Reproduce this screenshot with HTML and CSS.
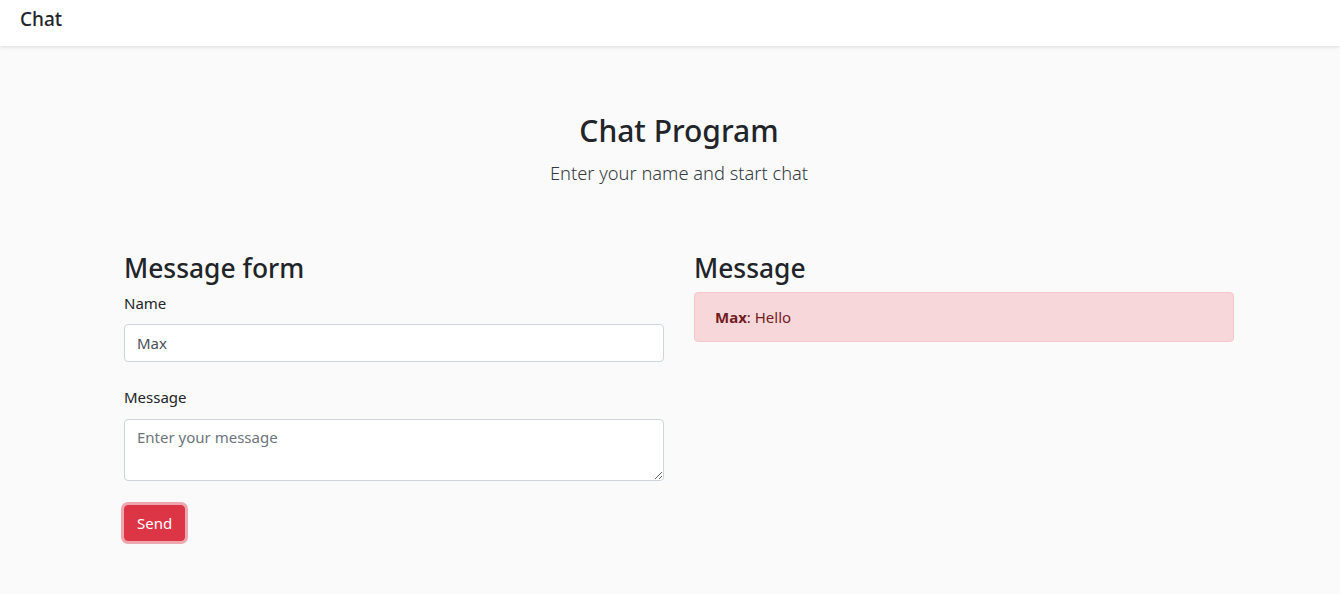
FILE: index.html
```html
<!DOCTYPE html>
<html lang="en">
<head>
<meta charset="utf-8">
<title>Chat</title>
<link rel="stylesheet" href="styles.css">
</head>
<body>
<nav class="navbar"><span class="brand">Chat</span></nav>
<main class="page">
  <header class="hero">
    <h2 class="title">Chat Program</h2>
    <p class="lead">Enter your name and start chat</p>
  </header>
  <div class="row">
    <section class="col">
      <h3 class="heading">Message form</h3>
      <div class="group">
        <label class="label" for="name">Name</label>
        <input class="field" id="name" type="text" value="Max">
      </div>
      <div class="group">
        <label class="label" for="msg">Message</label>
        <textarea class="field area" id="msg" rows="2" placeholder="Enter your message"></textarea>
      </div>
      <button class="btn" type="button">Send</button>
    </section>
    <section class="col">
      <h3 class="heading">Message</h3>
      <div class="alert"><strong>Max</strong>: Hello</div>
    </section>
  </div>
</main>
</body>
</html>
```

FILE: styles.css
```css
* { box-sizing: border-box; }
html, body { margin: 0; }
body {
  background: #fafafa;
  color: #212529;
  font-family: "Noto Sans", "Open Sans", sans-serif;
  font-size: 16px;
  line-height: 1.5;
  height: 594px;
  overflow: hidden;
}
.navbar {
  height: 46px;
  background: #fff;
  box-shadow: 0 1px 4px rgba(0,0,0,0.12);
  display: flex;
  align-items: center;
  padding-left: 20px;
  padding-bottom: 8px;
}
.brand {
  font-size: 19px;
  font-weight: 500;
  color: #212529;
}
.page {
  width: 1140px;
  margin-left: calc(50% - 561px);
}
.hero {
  text-align: center;
  padding-top: 66px;
}
.title {
  margin: 0;
  font-size: 30px;
  font-weight: 500;
  line-height: 38px;
}
.lead {
  margin: 8px 0 0;
  font-size: 18.3px;
  line-height: 30px;
  font-weight: 300;
  color: #343a40;
}
.row {
  display: flex;
  gap: 30px;
  padding: 0 15px;
  margin-top: 64px;
}
.col { flex: 1; }
.heading {
  margin: 0 0 6px;
  font-size: 26.4px;
  font-weight: 500;
  line-height: 33.6px;
}
.group { margin-bottom: 24px; }
.label {
  display: block;
  margin-bottom: 10px;
  font-size: 15px;
}
.field {
  display: block;
  width: 100%;
  height: 38px;
  padding: 6px 12px;
  font: inherit;
  font-size: 15px;
  color: #495057;
  background: #fff;
  border: 1px solid #ced4da;
  border-radius: 4px;
}
.field::placeholder { color: #6c757d; }
.area { height: 62px; resize: vertical; }
.btn {
  display: block;
  font: inherit;
  font-size: 15px;
  color: #fff;
  background: #dc3545;
  border: 1px solid #dc3545;
  border-radius: 4px;
  padding: 6px 12px;
  box-shadow: 0 0 0 3px rgba(225,83,97,0.5);
}
.alert {
  padding: 12px 20px;
  background: #f8d7da;
  border: 1px solid #f5c6cb;
  border-radius: 4px;
  color: #721c24;
  font-size: 15px;
  line-height: 24px;
}
.alert strong { font-weight: 700; }
```
